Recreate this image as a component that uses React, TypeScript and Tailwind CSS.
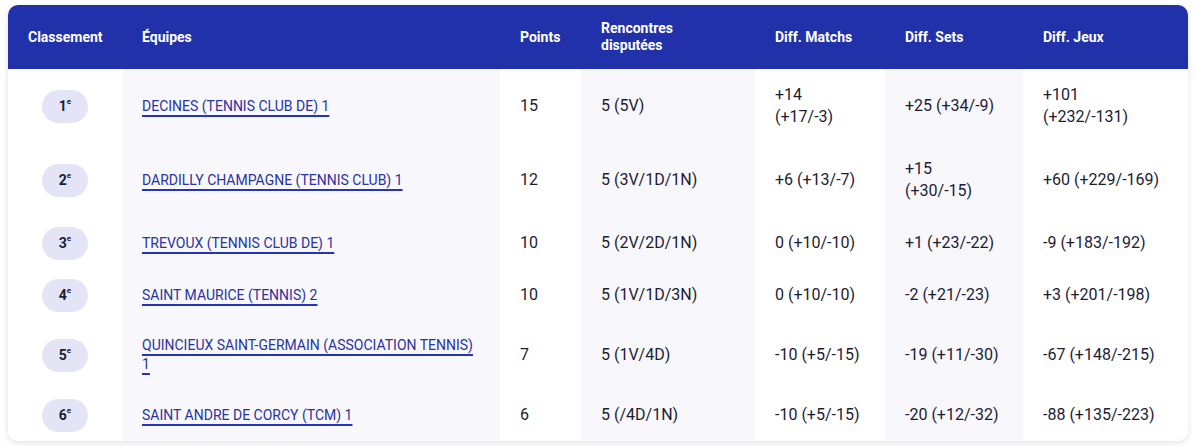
import React from "react";

type Row = {
  rank: number;
  team: string;
  points: number;
  played: string;
  matchs: string;
  sets: string;
  jeux: string;
};

const rows: Row[] = [
  { rank: 1, team: "DECINES (TENNIS CLUB DE) 1", points: 15, played: "5 (5V)", matchs: "+14 (+17/-3)", sets: "+25 (+34/-9)", jeux: "+101 (+232/-131)" },
  { rank: 2, team: "DARDILLY CHAMPAGNE (TENNIS CLUB) 1", points: 12, played: "5 (3V/1D/1N)", matchs: "+6 (+13/-7)", sets: "+15 (+30/-15)", jeux: "+60 (+229/-169)" },
  { rank: 3, team: "TREVOUX (TENNIS CLUB DE) 1", points: 10, played: "5 (2V/2D/1N)", matchs: "0 (+10/-10)", sets: "+1 (+23/-22)", jeux: "-9 (+183/-192)" },
  { rank: 4, team: "SAINT MAURICE (TENNIS) 2", points: 10, played: "5 (1V/1D/3N)", matchs: "0 (+10/-10)", sets: "-2 (+21/-23)", jeux: "+3 (+201/-198)" },
  { rank: 5, team: "QUINCIEUX SAINT-GERMAIN (ASSOCIATION TENNIS) 1", points: 7, played: "5 (1V/4D)", matchs: "-10 (+5/-15)", sets: "-19 (+11/-30)", jeux: "-67 (+148/-215)" },
  { rank: 6, team: "SAINT ANDRE DE CORCY (TCM) 1", points: 6, played: "5 (/4D/1N)", matchs: "-10 (+5/-15)", sets: "-20 (+12/-32)", jeux: "-88 (+135/-223)" },
];

const th = "px-5 py-[15px] text-left align-middle text-[14px] leading-[17px] font-bold text-white";
const td = "pl-5 pr-5 py-[15px] align-middle text-[16px] leading-[22px] text-[#1c1c34]";

export default function App() {
  return (
    <div className="bg-white min-h-screen pt-[5px] pl-2" style={{ fontFamily: "Roboto, 'Liberation Sans', sans-serif" }}>
      <div className="w-[1180px] rounded-[10px] overflow-hidden bg-white shadow-[0_2px_6px_rgba(20,20,60,0.12)]">
        <table className="w-full table-fixed border-collapse">
          <colgroup>
            <col className="w-[114px]" />
            <col className="w-[378px]" />
            <col className="w-[81px]" />
            <col className="w-[174px]" />
            <col className="w-[130px]" />
            <col className="w-[138px]" />
            <col className="w-[165px]" />
          </colgroup>
          <thead className="bg-[#2131a9]">
            <tr className="h-16">
              <th className={th}>Classement</th>
              <th className={th}>Équipes</th>
              <th className={th}>Points</th>
              <th className={th}>
                Rencontres
                <br />
                disputées
              </th>
              <th className={th}>Diff. Matchs</th>
              <th className={th}>Diff. Sets</th>
              <th className={th}>Diff. Jeux</th>
            </tr>
          </thead>
          <tbody>
            {rows.map((r) => (
              <tr key={r.rank}>
                <td className="px-2 py-[9px] align-middle">
                  <div className="mx-auto flex h-[33px] w-[46px] items-center justify-center rounded-full bg-[#e3e4f6] text-[14px] font-bold text-[#1c1c34]">
                    {r.rank}
                    <sup className="text-[8px]">e</sup>
                  </div>
                </td>
                <td className="bg-[#f7f7fc] px-5 py-[15px] align-middle text-[14px] leading-[19px]">
                  <a href="#" className="text-[#2a33a0] underline decoration-[#2434bc] decoration-2 underline-offset-[4px]">
                    {r.team}
                  </a>
                </td>
                <td className={td}>{r.points}</td>
                <td className={`${td} bg-[#f7f7fc]`}>{r.played}</td>
                <td className={`${td} !pr-6`}>{r.matchs}</td>
                <td className={`${td} bg-[#f7f7fc]`}>{r.sets}</td>
                <td className={td}>{r.jeux}</td>
              </tr>
            ))}
          </tbody>
        </table>
      </div>
    </div>
  );
}
